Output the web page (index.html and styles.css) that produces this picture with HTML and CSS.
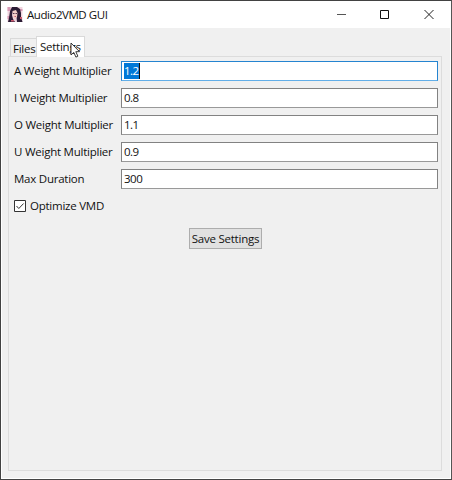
FILE: index.html
```html
<!DOCTYPE html>
<html lang="en">
<head>
<meta charset="utf-8">
<title>Audio2VMD GUI</title>
<link rel="stylesheet" href="styles.css">
</head>
<body>
<div class="window">
  <header class="titlebar">
    <svg class="app-icon" width="16" height="16" viewBox="0 0 16 16">
      <path fill="#f0d4de" d="M.5 0h15v15H.5z"/>
      <path fill="#d79ab5" d="M.5 0h3v4h-3zM.5 9h3v3h-3zM13 2h2.500v2H13z"/>
      <path fill="#2b1c35" d="M5 0h5l3 2 1 4v4l1.500 5H10L9 5 6 4 5 8l1 4 2 3H1l1-4 1-7z"/>
      <path fill="#f3cfc9" d="M5.500 4L9 3l1.500 3-.5 4-2 2-2-2z"/>
      <path fill="#5a3a52" d="M6 6h1.500v1H6zM8.500 6H10v1H8.500z"/>
      <path fill="#c95b70" d="M7.500 9H9v1H7.500zM4 13h3v1.500H4zM13 10h2v2h-2z"/>
    </svg>
    <span class="title">Audio2VMD GUI</span>
    <svg class="controls" width="110" height="12" viewBox="0 0 110 12">
      <path d="M4 5.500h9" stroke="#555"/>
      <path d="M47.500 1.500h8v8h-8z" fill="none" stroke="#111"/>
      <path d="M91.500 1l9 9m0-9l-9 9" stroke="#222"/>
    </svg>
  </header>
  <main class="content">
    <nav class="tabs">
      <div class="tab">Files</div>
      <div class="tab active">Settings
        <svg class="cursor" width="12" height="18" viewBox="0 0 12 18"><path d="M1 1v12l2.800-2.600 2.100 4.700 2-.9-2.100-4.500h3.700z" fill="#fff" stroke="#222" stroke-width=".9"/></svg>
      </div>
    </nav>
    <section class="pane">
      <div class="row"><span class="label">A Weight Multiplier</span><div class="field focus"><span class="selected">1.2</span></div></div>
      <div class="row"><span class="label">I Weight Multiplier</span><div class="field">0.8</div></div>
      <div class="row"><span class="label">O Weight Multiplier</span><div class="field">1.1</div></div>
      <div class="row"><span class="label">U Weight Multiplier</span><div class="field">0.9</div></div>
      <div class="row"><span class="label">Max Duration</span><div class="field">300</div></div>
      <div class="check">
        <svg width="12" height="12" viewBox="0 0 12 12"><path d="M.5.5h11v11H.5z" fill="#fff" stroke="#333"/><path d="M2.500 6l2.300 2.500L9.600 3.500" fill="none" stroke="#333" stroke-width="1"/></svg>
        <span>Optimize VMD</span>
      </div>
      <div class="save">Save Settings</div>
    </section>
  </main>
</div>
</body>
</html>
```
FILE: styles.css
```css
* { box-sizing: border-box; }
body {
  margin: 0;
  font: 11.5px/16px "Open Sans", "Noto Sans", sans-serif;
  letter-spacing: -0.24px;
  color: #111;
  white-space: nowrap;
}
.window {
  width: 452px;
  height: 480px;
  display: flex;
  flex-direction: column;
  background: #fff;
  border: 1px solid #424242;
  border-right-color: #555;
  border-bottom-color: #444;
}
.titlebar {
  height: 27px;
  flex: none;
  display: flex;
  align-items: center;
  padding-left: 6px;
  background: #fff;
}
.title { margin-left: 4px; letter-spacing: -0.45px; }
.controls { margin-left: auto; margin-right: 8px; }
.content {
  flex: 1;
  margin: 0 1px 1px;
  padding: 8px 8px 7px 6px;
  background: #f0f0f0;
  display: flex;
  flex-direction: column;
}
.tabs {
  height: 21px;
  display: flex;
  align-items: flex-end;
  padding-left: 2px;
  margin-bottom: -1px;
  position: relative;
}
.tab {
  width: 26px;
  height: 18px;
  margin-bottom: 1px;
  padding: 2px 0 0 2px;
  line-height: 16px;
  border: 1px solid #d9d9d9;
  border-right: 0;
  border-bottom: 0;
}
.tab.active {
  position: relative;
  width: 49px;
  height: 21px;
  margin-bottom: 0;
  padding-left: 3px;
  background: #fff;
  border-right: 1px solid #d9d9d9;
  letter-spacing: -0.25px;
}
.cursor { position: absolute; left: 33px; top: 5px; }
.pane {
  flex: 1;
  border: 1px solid #dcdcdc;
  padding: 4px 3px 0 5px;
  display: flex;
  flex-direction: column;
}
.row { display: flex; height: 20px; margin-bottom: 7px; align-items: center; }
.label { width: 107px; flex: none; }
.field {
  flex: 1;
  height: 20px;
  border: 1px solid #828282;
  border-bottom-color: #999;
  background: #fff;
  padding: 1px 2px;
  line-height: 16px;
  letter-spacing: -0.5px;
}
.focus { border-color: #2584d0; border-bottom-color: #62aee8; }
.selected {
  display: inline-block;
  height: 16px;
  background: #0078d7;
  color: #fff;
  border-right: 1px solid #111;
}
.check { display: flex; height: 20px; align-items: center; gap: 4px; }
.save {
  width: 73px;
  height: 21px;
  margin: 12px 0 0 175px;
  background: #e1e1e1;
  border: 1px solid #adadad;
  line-height: 20px;
  text-align: center;
}
```
